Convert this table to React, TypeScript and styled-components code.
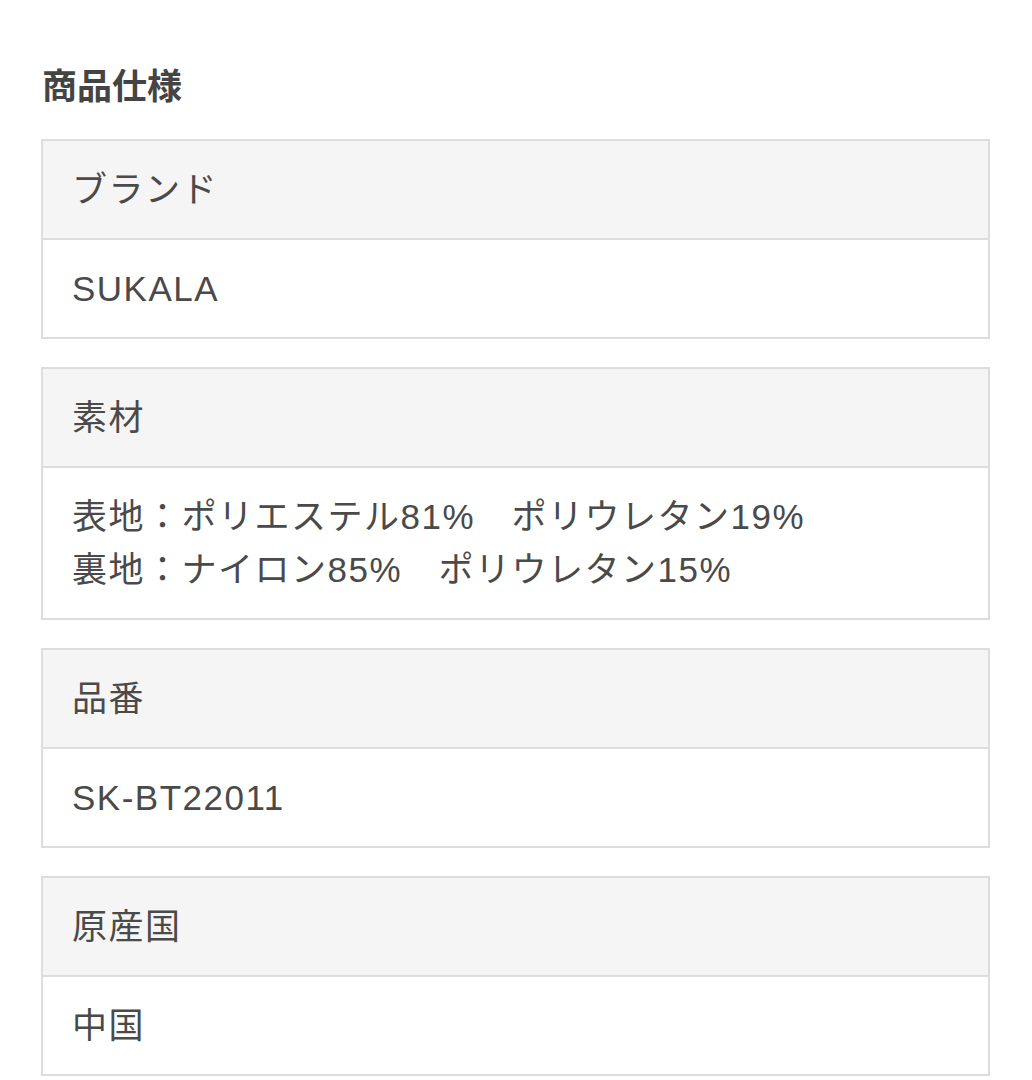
import React from "react";
import styled, { createGlobalStyle } from "styled-components";

const Global = createGlobalStyle`
  html, body { margin: 0; padding: 0; background: #ffffff; }
  body { font-family: "Liberation Sans", "Noto Sans CJK JP", sans-serif; color: #444; }
`;

const Page = styled.div`
  padding: 58px 42px 0 41px;
  display: flex;
  flex-direction: column;
`;

const Title = styled.h2`
  margin: 0 0 29px 1px;
  font-family: "Noto Sans CJK JP", sans-serif;
  font-size: 35px;
  line-height: 52px;
  font-weight: 700;
  color: #444;
`;

const List = styled.div`
  display: flex;
  flex-direction: column;
  gap: 28px;
`;

const Card = styled.section`
  border: 2px solid #dddddd;
  display: flex;
  flex-direction: column;
`;

const Row = styled.div<{ $head?: boolean }>`
  padding: 22px 29px;
  font-size: 35px;
  line-height: 53px;
  letter-spacing: 1.5px;
  color: #4a4a4a;
  background: ${(p) => (p.$head ? "#f5f5f5" : "#ffffff")};
  border-bottom: ${(p) => (p.$head ? "2px solid #dddddd" : "none")};
  white-space: pre;
`;

const specs = [
  { label: "ブランド", value: ["SUKALA"] },
  {
    label: "素材",
    value: [
      "表地：ポリエステル81%　ポリウレタン19%",
      "裏地：ナイロン85%　ポリウレタン15%",
    ],
  },
  { label: "品番", value: ["SK-BT22011"] },
  { label: "原産国", value: ["中国"] },
];

export default function App() {
  return (
    <>
      <Global />
      <Page>
        <Title>商品仕様</Title>
        <List>
          {specs.map((s) => (
            <Card key={s.label}>
              <Row $head>{s.label}</Row>
              <Row>{s.value.join("\n")}</Row>
            </Card>
          ))}
        </List>
      </Page>
    </>
  );
}
